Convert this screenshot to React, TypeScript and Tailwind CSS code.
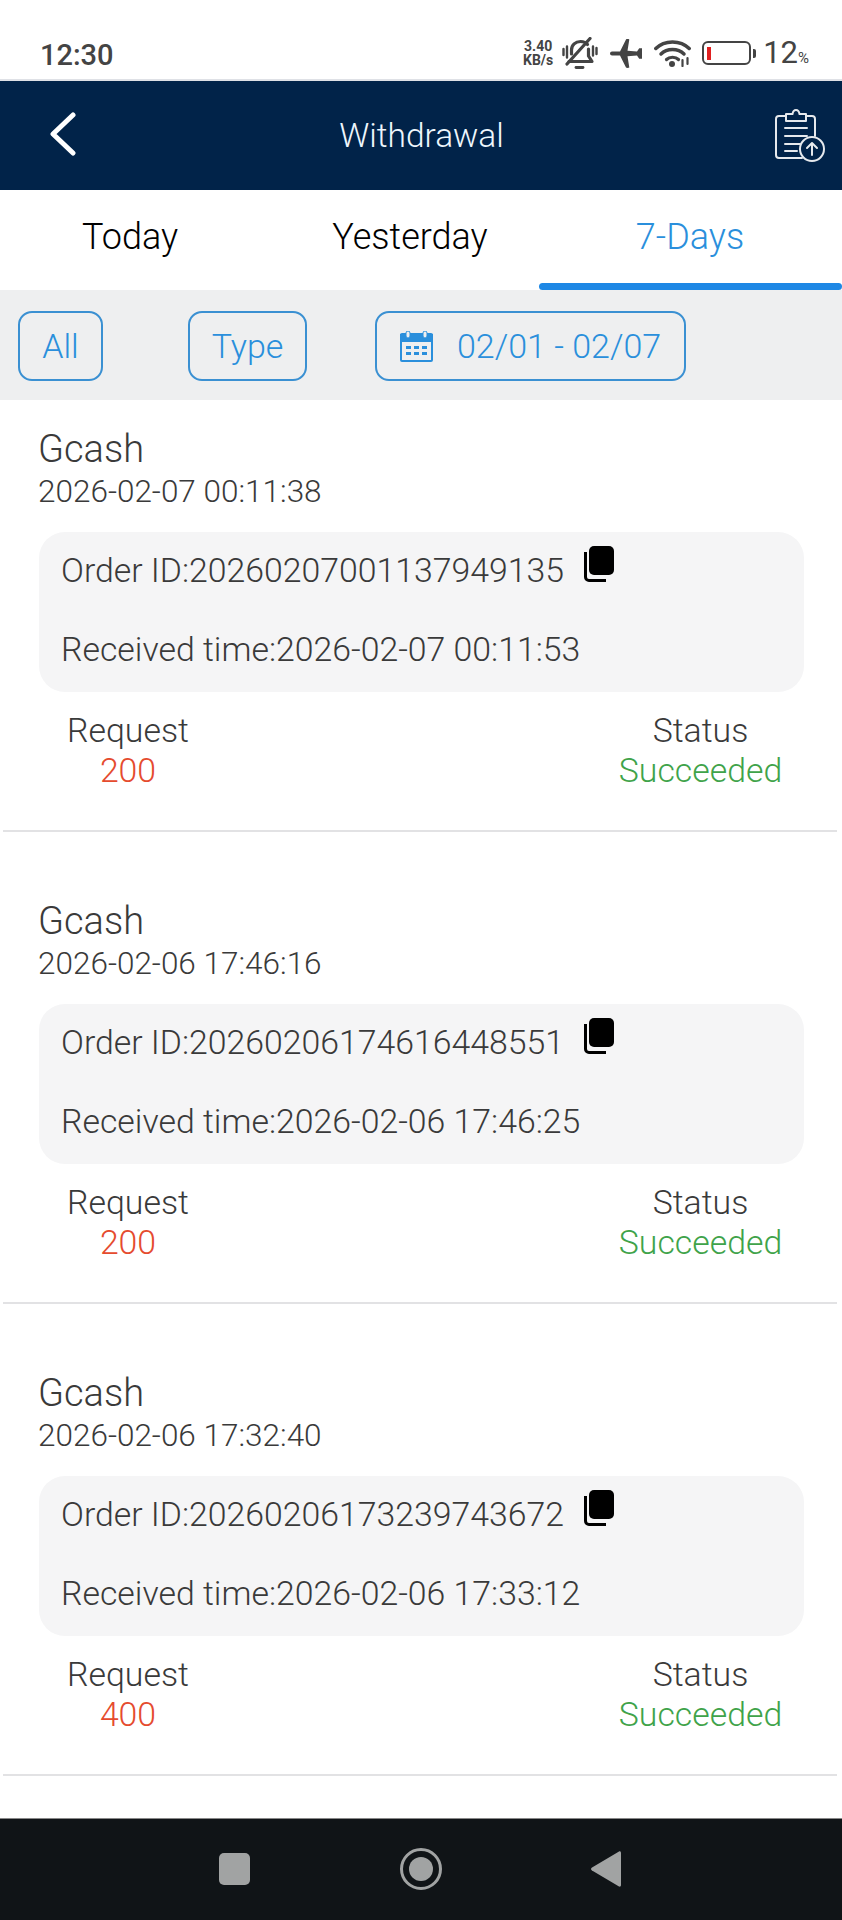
import React from "react";

const items = [
  { date: "2026-02-07 00:11:38", id: "20260207001137949135", recv: "2026-02-07 00:11:53", amt: "200" },
  { date: "2026-02-06 17:46:16", id: "20260206174616448551", recv: "2026-02-06 17:46:25", amt: "200" },
  { date: "2026-02-06 17:32:40", id: "20260206173239743672", recv: "2026-02-06 17:33:12", amt: "400" },
];

function Bell() {
  return (
    <svg width="36" height="32" viewBox="0 0 36 32" fill="none" stroke="#444" strokeLinecap="round">
      <path d="M9.500 17v-4c0-5 4-8.500 9-8.500 3 0 5.500 1 7 3" strokeWidth="3.200" />
      <path d="M26.500 12v7l3.500 5.500H11l-4 0" strokeWidth="3.200" strokeLinejoin="round" />
      <path d="M5 27 28 1.500" strokeWidth="3.200" />
      <path d="M14 30.500h7" strokeWidth="2.800" />
      <path d="M1.500 12v6M5 9.500v11M31 9.500v9M34.500 11v6" strokeWidth="2.400" />
    </svg>
  );
}

function Plane() {
  return (
    <svg width="33" height="29" viewBox="0 0 33 29" fill="#444">
      <path d="M0 14.500c0-1.200 1-2 2-2h8L16 .5c.3-.5 2.500-.6 3.300 0L17.500 11.800l9.500.7 2.200-3.200h2.800v10.400h-2.800L27 16.500l-9.500.7 1.800 11.300c-.8.600-3 .5-3.300 0L10 16.500H2c-1 0-2-.8-2-2z" />
    </svg>
  );
}

function Wifi() {
  return (
    <svg width="37" height="28" viewBox="0 0 37 28" fill="none" stroke="#444" strokeLinecap="round">
      <path d="M1.800 9.500C10.500 .8 26.500 .8 35.200 9.500" strokeWidth="3.500" />
      <path d="M7 15c6-6 17-6 23 0" strokeWidth="3.500" />
      <path d="M12.500 20.500c3-3 9-3 12 0" strokeWidth="3.200" />
      <circle cx="18" cy="25" r="3" fill="#444" stroke="none" />
      <path d="M28.500 21v6M33.500 19v6" strokeWidth="2.200" />
    </svg>
  );
}

function Clipboard() {
  return (
    <svg width="50" height="56" viewBox="0 0 50 56" fill="none" stroke="#fff" strokeLinecap="round" strokeLinejoin="round" strokeWidth="2" className="opacity-90">
      <path d="M10 9H4a3 3 0 0 0-3 3v36a3 3 0 0 0 3 3h23" />
      <path d="M32 9h5a3 3 0 0 1 3 3v17" />
      <path d="M11 14V7h6.500c.5-3 2-4 3.500-4s3 1 3.500 4H31v7z" />
      <path d="M10 21h22M10 29h22M10 37h15M10 44h12" />
      <circle cx="37" cy="42" r="12" />
      <path d="M37 48V36M32 41l5-5 5 5" />
    </svg>
  );
}

function Calendar() {
  return (
    <svg width="33" height="31" viewBox="0 0 33 31" className="shrink-0">
      <rect x="0" y="3" width="33" height="8" fill="#2a8fdc" />
      <rect x="1" y="3" width="31" height="27" fill="none" stroke="#2a8fdc" strokeWidth="2" rx="1" />
      <rect x="6" y="0" width="4" height="7" rx="2" fill="#eeeff0" stroke="#2a8fdc" strokeWidth="1" />
      <rect x="23" y="0" width="4" height="7" rx="2" fill="#eeeff0" stroke="#2a8fdc" strokeWidth="1" />
      <path d="M6 15h5v3H6zM14 15h5v3h-5zM22 15h5v3h-5zM6 21h5v3H6zM14 21h5v3h-5zM22 21h5v3h-5z" fill="#2a8fdc" />
    </svg>
  );
}

function Copy() {
  return (
    <svg width="30" height="36" viewBox="0 0 30 36" className="shrink-0">
      <rect x="5" y="0" width="25" height="29" rx="5" fill="#000" />
      <path d="M1.500 6v25a3.500 3.500 0 0 0 3.500 3.500h17" fill="none" stroke="#000" strokeWidth="3" />
    </svg>
  );
}

const font = { fontFamily: "Roboto, sans-serif" };

export default function App() {
  return (
    <div className="w-[842px] h-[1920px] flex flex-col bg-white overflow-hidden" style={font}>
      <div className="h-[79px] shrink-0 flex items-end justify-between pb-[8px] pl-[40px] pr-[33px] text-[#444]">
        <span className="text-[29px] leading-[32px] font-medium">12:30</span>
        <div className="flex items-center mb-[2px]">
          <div className="w-[34px] flex flex-col items-center text-[14px] leading-[14px] font-bold">
            <span>3.40</span>
            <span>KB/s</span>
          </div>
          <div className="ml-[7px]"><Bell /></div>
          <div className="ml-[12px]"><Plane /></div>
          <div className="ml-[11px]"><Wifi /></div>
          <div className="ml-[11px] w-[49px] h-[24px] border-[2.500px] border-[#444] rounded-[6px] flex items-center px-[3px]">
            <div className="w-[4px] h-[13px] bg-[#e02020]" />
          </div>
          <div className="ml-[2px] w-[3px] h-[9px] bg-[#444] rounded-r-[2px]" />
          <span className="ml-[7px] text-[31px] leading-[32px]">12</span>
          <span className="text-[15px] leading-[16px] mt-[10px]">%</span>
        </div>
      </div>
      <div className="h-[2px] shrink-0 bg-[#dfe1e6]" />

      <div className="h-[109px] shrink-0 bg-[#012349] grid grid-cols-[1fr_auto_1fr] items-center pl-[48px] pr-[17px]">
        <svg className="mb-[4px]" width="30" height="44" viewBox="0 0 30 44" fill="none" stroke="#fff" strokeWidth="5" strokeLinecap="round" strokeLinejoin="round">
          <path d="M25 3 5 22l20 19" />
        </svg>
        <span className="text-[33.500px] font-light text-[#eef6fc] leading-none -translate-x-[15px]">Withdrawal</span>
        <div className="justify-self-end mb-[2px]"><Clipboard /></div>
      </div>

      <div className="h-[100px] shrink-0 flex text-[36px] font-light text-black">
        <div className="w-[260px] flex items-center justify-center pb-[6px]">Today</div>
        <div className="ml-[10px] w-[280px] flex items-center justify-center pb-[6px]">Yesterday</div>
        <div className="w-[280px] flex items-center justify-center pb-[6px] text-[#2a8fdc] relative">
          7-Days
          <div className="absolute left-[-11px] bottom-0 w-[303px] h-[7px] rounded-[4px] bg-[#1e88e5]" />
        </div>
      </div>

      <div className="h-[110px] shrink-0 bg-[#eeeff0] flex items-center pl-[18px] pt-[2px] text-[34px] font-light text-[#2a8fdc]">
        <div className="w-[85px] h-[70px] border-2 border-[#3a90d2] rounded-[14px] flex items-center justify-center pt-[1px]">All</div>
        <div className="ml-[85px] w-[119px] h-[70px] border-2 border-[#3a90d2] rounded-[14px] flex items-center justify-center pt-[1px]">Type</div>
        <div className="ml-[68px] w-[311px] h-[70px] border-2 border-[#3a90d2] rounded-[14px] flex items-center pl-[23px] gap-[24px]">
          <Calendar />
          <span>02/01 - 02/07</span>
        </div>
      </div>

      <div className="flex-1 min-h-0 flex flex-col text-[#3a3a3a] font-light">
        {items.map((it, i) => (
          <div key={i} className="h-[432px] shrink-0 mb-[40px] flex flex-col">
            <div className="h-[132px] pl-[38px] pr-[39px] pt-[26px]">
              <div className="text-[38px] leading-[46px]">Gcash</div>
              <div className="text-[31.500px] leading-[40px]">{it.date}</div>
            </div>
            <div className="mx-[39px] w-[765px] h-[160px] rounded-[26px] bg-[#f5f5f6] px-[22px] pt-[16px] text-[33.800px] leading-[40px]">
              <div className="flex items-start h-[80px]">
                <span className="mt-[3px]">Order ID:{it.id}</span>
                <div className="ml-[20px] -mt-[2px]"><Copy /></div>
              </div>
              <div className="mt-[2px]">Received time:{it.recv}</div>
            </div>
            <div className="flex justify-between mt-[19px] text-[33.800px] leading-[40px] pl-[48px] pr-[61px]">
              <div className="w-[160px] flex flex-col items-center">
                <span>Request</span>
                <span className="text-[#e54b2e]">{it.amt}</span>
              </div>
              <div className="w-[161px] flex flex-col items-center">
                <span>Status</span>
                <span className="text-[#3fa34a]">Succeeded</span>
              </div>
            </div>
            <div className="flex-1" />
            <div className="mx-[3px] w-[834px] h-[2px] bg-[#e2e2e4]" />
          </div>
        ))}
      </div>

      <div className="h-[102px] shrink-0 bg-[#101417] border-t border-[#888] flex items-center pl-[219px] pb-[2px]">
        <div className="w-[31px] h-[32px] rounded-[5px] bg-[#a1a3a3]" />
        <div className="ml-[150px] w-[42px] h-[42px] rounded-full border-[3px] border-[#a1a3a3] flex items-center justify-center">
          <div className="w-[24px] h-[24px] rounded-full bg-[#a1a3a3]" />
        </div>
        <svg className="ml-[149px]" width="30" height="38" viewBox="0 0 30 38" fill="#a1a3a3">
          <path d="M28 1.500c1 -.5 2 .2 2 1.500v32c0 1.300-1 2-2 1.500L1 20.500c-1.300-.8-1.300-2.200 0-3z" />
        </svg>
      </div>
    </div>
  );
}
